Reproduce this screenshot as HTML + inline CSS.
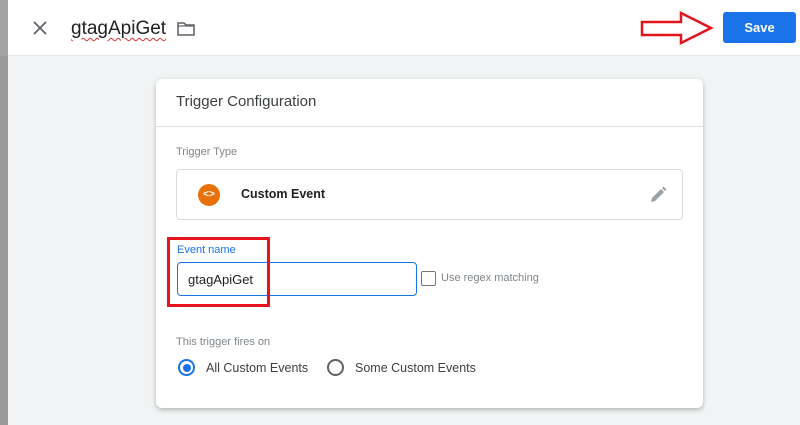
<!DOCTYPE html>
<html><head><meta charset="utf-8"><style>
*{box-sizing:border-box;margin:0;padding:0}
body{width:800px;height:425px;overflow:hidden;background:#f1f3f4;font-family:"Liberation Sans",Arial,sans-serif;position:relative}
.left{position:absolute;left:0;top:0;width:8px;height:425px;background:#9a9a9a}
.left .t{position:absolute;left:0;top:0;width:8px;height:56px;background:#a3a3a3}
.hdr{position:absolute;left:8px;top:0;width:792px;height:56px;background:#fff;border-bottom:1px solid #e8e8e8}
.title{position:absolute;left:63px;top:18px;font-size:19px;color:#202124;text-decoration:underline wavy #d33;text-decoration-thickness:1px;text-underline-offset:3px}
.save{position:absolute;left:715px;top:12px;width:73px;height:31px;background:#1a73e8;border-radius:3px;color:#fff;font-weight:bold;font-size:13px;text-align:center;line-height:31px}
.card{position:absolute;left:156px;top:79px;width:547px;height:329px;background:#fff;border-radius:6px;box-shadow:0 2px 5px rgba(0,0,0,.25)}
.ch{height:48px;border-bottom:1px solid #e0e0e0;padding:14px 20px;font-size:15px;color:#3c4043}
.lbl{position:absolute;font-size:11px;color:#80868b}
.tt{position:absolute;left:20px;top:90px;width:507px;height:51px;border:1px solid #dadce0;border-radius:4px}
.ic{position:absolute;left:21px;top:14px;width:22px;height:22px;border-radius:50%;background:#e8710a;color:#fff;font-size:10px;text-align:center;line-height:22px;font-weight:bold}
.ce{position:absolute;left:64px;top:17px;font-size:12.5px;font-weight:bold;color:#202124}
.inp{position:absolute;left:21px;top:183px;width:240px;height:34px;border:1.5px solid #1a73e8;border-radius:4px;padding:9px 10px;font-size:13px;color:#202124}
.red{position:absolute;left:167px;top:237px;width:103px;height:70px;border:3px solid #e8141c}
.cb{position:absolute;left:421px;top:271px;width:15px;height:15px;border:1.5px solid #777;border-radius:2px}
.rad{position:absolute;width:17px;height:17px;border-radius:50%;border:2px solid #5f6368}
</style></head><body>
<div class="left"><div class="t"></div></div>
<div class="hdr">
<svg style="position:absolute;left:25px;top:21px" width="14" height="14"><path d="M1 1L13 13M13 1L1 13" stroke="#5f6368" stroke-width="1.8"/></svg>
<div class="title">gtagApiGet</div>
<svg style="position:absolute;left:169px;top:21px" width="18" height="15"><path d="M1 2h6l2 2h8v10H1z" fill="none" stroke="#5f6368" stroke-width="1.6"/><path d="M1 5h16" stroke="#5f6368" stroke-width="1.2"/></svg>
<div class="save">Save</div>
</div>
<svg style="position:absolute;left:640px;top:11px" width="75" height="35"><path d="M2 11H41V2L71 17L41 32V24H2Z" fill="#fff" stroke="#e3141c" stroke-width="2.5" stroke-linejoin="miter"/></svg>
<div class="card">
<div class="ch">Trigger Configuration</div>
<div class="lbl" style="left:20px;top:67px">Trigger Type</div>
<div class="tt"><div class="ic">&lt;&gt;</div><div class="ce">Custom Event</div>
<svg style="position:absolute;left:472px;top:16px" width="18" height="18"><path d="M2 16l1-4 9-9 3 3-9 9z" fill="#9aa0a6"/><path d="M13 2l1.5-1.5 3 3L16 5z" fill="#9aa0a6"/></svg></div>
<div class="lbl" style="left:21px;top:165px;color:#1a73e8">Event name</div>
<div class="inp">gtagApiGet</div>
<div class="lbl" style="left:285px;top:193px;font-size:11px">Use regex matching</div>
<div class="lbl" style="left:20px;top:257px">This trigger fires on</div>
<div class="rad" style="left:22px;top:280px;border-color:#1a73e8"><div style="position:absolute;left:2.5px;top:2.5px;width:8px;height:8px;border-radius:50%;background:#1a73e8"></div></div>
<div style="position:absolute;left:50px;top:282px;font-size:12.5px;color:#3c4043">All Custom Events</div>
<div class="rad" style="left:171px;top:280px"></div>
<div style="position:absolute;left:199px;top:282px;font-size:12.5px;color:#3c4043">Some Custom Events</div>
</div>
<div class="cb"></div>
<div class="red"></div>
</body></html>
